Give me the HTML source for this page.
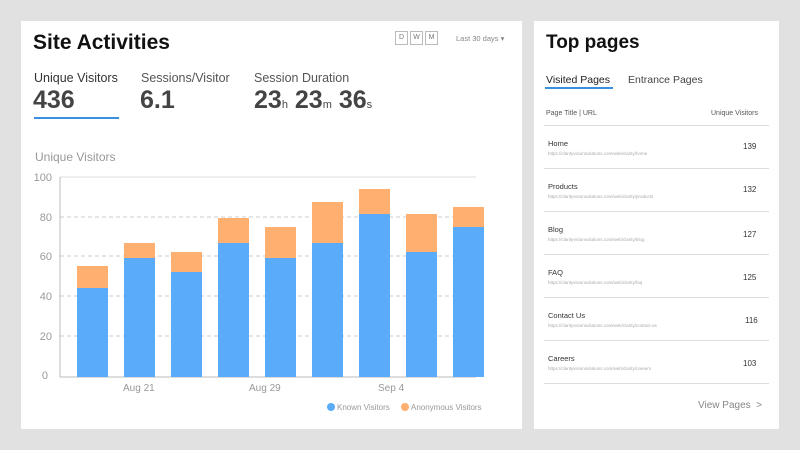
<!DOCTYPE html><html><head><style>
body{margin:0;width:800px;height:450px;background:#e1e1e1;font-family:"Liberation Sans",sans-serif;position:relative;overflow:hidden}
.card{position:absolute;background:#fff}
.a{position:absolute;white-space:nowrap}
</style></head><body>
<div class="card" style="left:21px;top:21px;width:501px;height:408px"></div>
<div class="card" style="left:534px;top:21px;width:245px;height:408px"></div>
<div class="a" style="left:33px;top:31px;font-size:21px;font-weight:bold;color:#111">Site Activities</div>
<div class="a" style="left:395px;top:31px;display:flex;gap:2px">
<span style="border:1px solid #bbb;width:11px;height:12px;font-size:7px;color:#777;text-align:center;line-height:12px">D</span>
<span style="border:1px solid #bbb;width:11px;height:12px;font-size:7px;color:#777;text-align:center;line-height:12px">W</span>
<span style="border:1px solid #bbb;width:11px;height:12px;font-size:7px;color:#777;text-align:center;line-height:12px">M</span></div>
<div class="a" style="left:456px;top:34px;font-size:7.5px;color:#888">Last 30 days ▾</div>
<div class="a" style="left:34px;top:71px;font-size:12.5px;color:#333">Unique Visitors</div>
<div class="a" style="left:141px;top:71px;font-size:12.5px;color:#555">Sessions/Visitor</div>
<div class="a" style="left:254px;top:71px;font-size:12.5px;color:#555">Session Duration</div>
<div class="a" style="left:33px;top:86px;font-size:25px;color:#444;font-weight:bold">436</div>
<div class="a" style="left:34px;top:117px;width:85px;height:2px;background:#3a8fe0"></div>
<div class="a" style="left:140px;top:86px;font-size:25px;color:#444;font-weight:bold">6.1</div>
<div class="a" style="left:254px;top:86px;font-size:25px;color:#444;font-weight:bold">23<span style="font-size:11px;font-weight:normal">h</span> 23<span style="font-size:11px;font-weight:normal">m</span> 36<span style="font-size:11px;font-weight:normal">s</span></div>
<div class="a" style="left:35px;top:150px;font-size:12px;color:#999">Unique Visitors</div>
<svg class="a" style="left:0;top:0" width="530" height="430" font-family="Liberation Sans" font-size="11" fill="#999">
<g stroke="#ccc" stroke-dasharray="4 3"><line x1="60" x2="476" y1="217" y2="217"/><line x1="60" x2="476" y1="256" y2="256"/><line x1="60" x2="476" y1="296" y2="296"/><line x1="60" x2="476" y1="336" y2="336"/></g>
<line x1="60" x2="476" y1="177" y2="177" stroke="#ddd"/>
<line x1="60" x2="60" y1="177" y2="377" stroke="#bbb"/><line x1="60" x2="476" y1="377" y2="377" stroke="#bbb"/>
<g text-anchor="end"><text x="52" y="181">100</text><text x="52" y="221">80</text><text x="52" y="260">60</text><text x="52" y="300">40</text><text x="52" y="340">20</text><text x="48" y="379">0</text></g>
<text x="123" y="391" font-size="10">Aug 21</text><text x="249" y="391" font-size="10">Aug 29</text><text x="378" y="391" font-size="10">Sep 4</text>
<circle cx="331" cy="407" r="4" fill="#5aabfa"/><text x="337" y="410" font-size="8">Known Visitors</text>
<circle cx="405" cy="407" r="4" fill="#ffb070"/><text x="411" y="410" font-size="8">Anonymous Visitors</text>
<g>
<rect x="77" y="266" width="31" height="22" fill="#ffb070"/><rect x="77" y="288" width="31" height="89" fill="#5aabfa"/>
<rect x="124" y="243" width="31" height="15" fill="#ffb070"/><rect x="124" y="258" width="31" height="119" fill="#5aabfa"/>
<rect x="171" y="252" width="31" height="20" fill="#ffb070"/><rect x="171" y="272" width="31" height="105" fill="#5aabfa"/>
<rect x="218" y="218" width="31" height="25" fill="#ffb070"/><rect x="218" y="243" width="31" height="134" fill="#5aabfa"/>
<rect x="265" y="227" width="31" height="31" fill="#ffb070"/><rect x="265" y="258" width="31" height="119" fill="#5aabfa"/>
<rect x="312" y="202" width="31" height="41" fill="#ffb070"/><rect x="312" y="243" width="31" height="134" fill="#5aabfa"/>
<rect x="359" y="189" width="31" height="25" fill="#ffb070"/><rect x="359" y="214" width="31" height="163" fill="#5aabfa"/>
<rect x="406" y="214" width="31" height="38" fill="#ffb070"/><rect x="406" y="252" width="31" height="125" fill="#5aabfa"/>
<rect x="453" y="207" width="31" height="20" fill="#ffb070"/><rect x="453" y="227" width="31" height="150" fill="#5aabfa"/>
</g></svg>
<div class="a" style="left:546px;top:32px;font-size:19px;font-weight:bold;color:#111">Top pages</div>
<div class="a" style="left:546px;top:74px;font-size:10.5px;color:#222">Visited Pages</div>
<div class="a" style="left:545px;top:87px;width:68px;height:2px;background:#3a8fe0"></div>
<div class="a" style="left:628px;top:74px;font-size:10.5px;color:#444">Entrance Pages</div>
<div class="a" style="left:546px;top:110px;font-size:7px;color:#555">Page Title | URL</div>
<div class="a" style="left:711px;top:110px;font-size:7px;color:#555">Unique Visitors</div>
<div class="a" style="left:544px;top:125px;width:225px;height:1px;background:#ddd"></div>
<div class="a" style="left:548px;top:139px;font-size:7.5px;color:#333">Home</div><div class="a" style="left:548px;top:151px;font-size:4.5px;color:#aaa">https://clarityvisionsolutions.com/web/clarity/home</div><div class="a" style="left:743px;top:142px;font-size:8px;color:#333">139</div><div class="a" style="left:544px;top:168px;width:225px;height:1px;background:#ddd"></div>
<div class="a" style="left:548px;top:182px;font-size:7.5px;color:#333">Products</div><div class="a" style="left:548px;top:194px;font-size:4.5px;color:#aaa">https://clarityvisionsolutions.com/web/clarity/products</div><div class="a" style="left:743px;top:185px;font-size:8px;color:#333">132</div><div class="a" style="left:544px;top:211px;width:225px;height:1px;background:#ddd"></div>
<div class="a" style="left:548px;top:225px;font-size:7.5px;color:#333">Blog</div><div class="a" style="left:548px;top:237px;font-size:4.5px;color:#aaa">https://clarityvisionsolutions.com/web/clarity/blog</div><div class="a" style="left:743px;top:230px;font-size:8px;color:#333">127</div><div class="a" style="left:544px;top:254px;width:225px;height:1px;background:#ddd"></div>
<div class="a" style="left:548px;top:268px;font-size:7.5px;color:#333">FAQ</div><div class="a" style="left:548px;top:280px;font-size:4.5px;color:#aaa">https://clarityvisionsolutions.com/web/clarity/faq</div><div class="a" style="left:743px;top:273px;font-size:8px;color:#333">125</div><div class="a" style="left:544px;top:297px;width:225px;height:1px;background:#ddd"></div>
<div class="a" style="left:548px;top:311px;font-size:7.5px;color:#333">Contact Us</div><div class="a" style="left:548px;top:323px;font-size:4.5px;color:#aaa">https://clarityvisionsolutions.com/web/clarity/contact-us</div><div class="a" style="left:745px;top:316px;font-size:8px;color:#333">116</div><div class="a" style="left:544px;top:340px;width:225px;height:1px;background:#ddd"></div>
<div class="a" style="left:548px;top:354px;font-size:7.5px;color:#333">Careers</div><div class="a" style="left:548px;top:366px;font-size:4.5px;color:#aaa">https://clarityvisionsolutions.com/web/clarity/careers</div><div class="a" style="left:743px;top:359px;font-size:8px;color:#333">103</div><div class="a" style="left:544px;top:383px;width:225px;height:1px;background:#ddd"></div>
<div class="a" style="left:698px;top:400px;font-size:10px;color:#888">View Pages &nbsp;&gt;</div>
</body></html>
